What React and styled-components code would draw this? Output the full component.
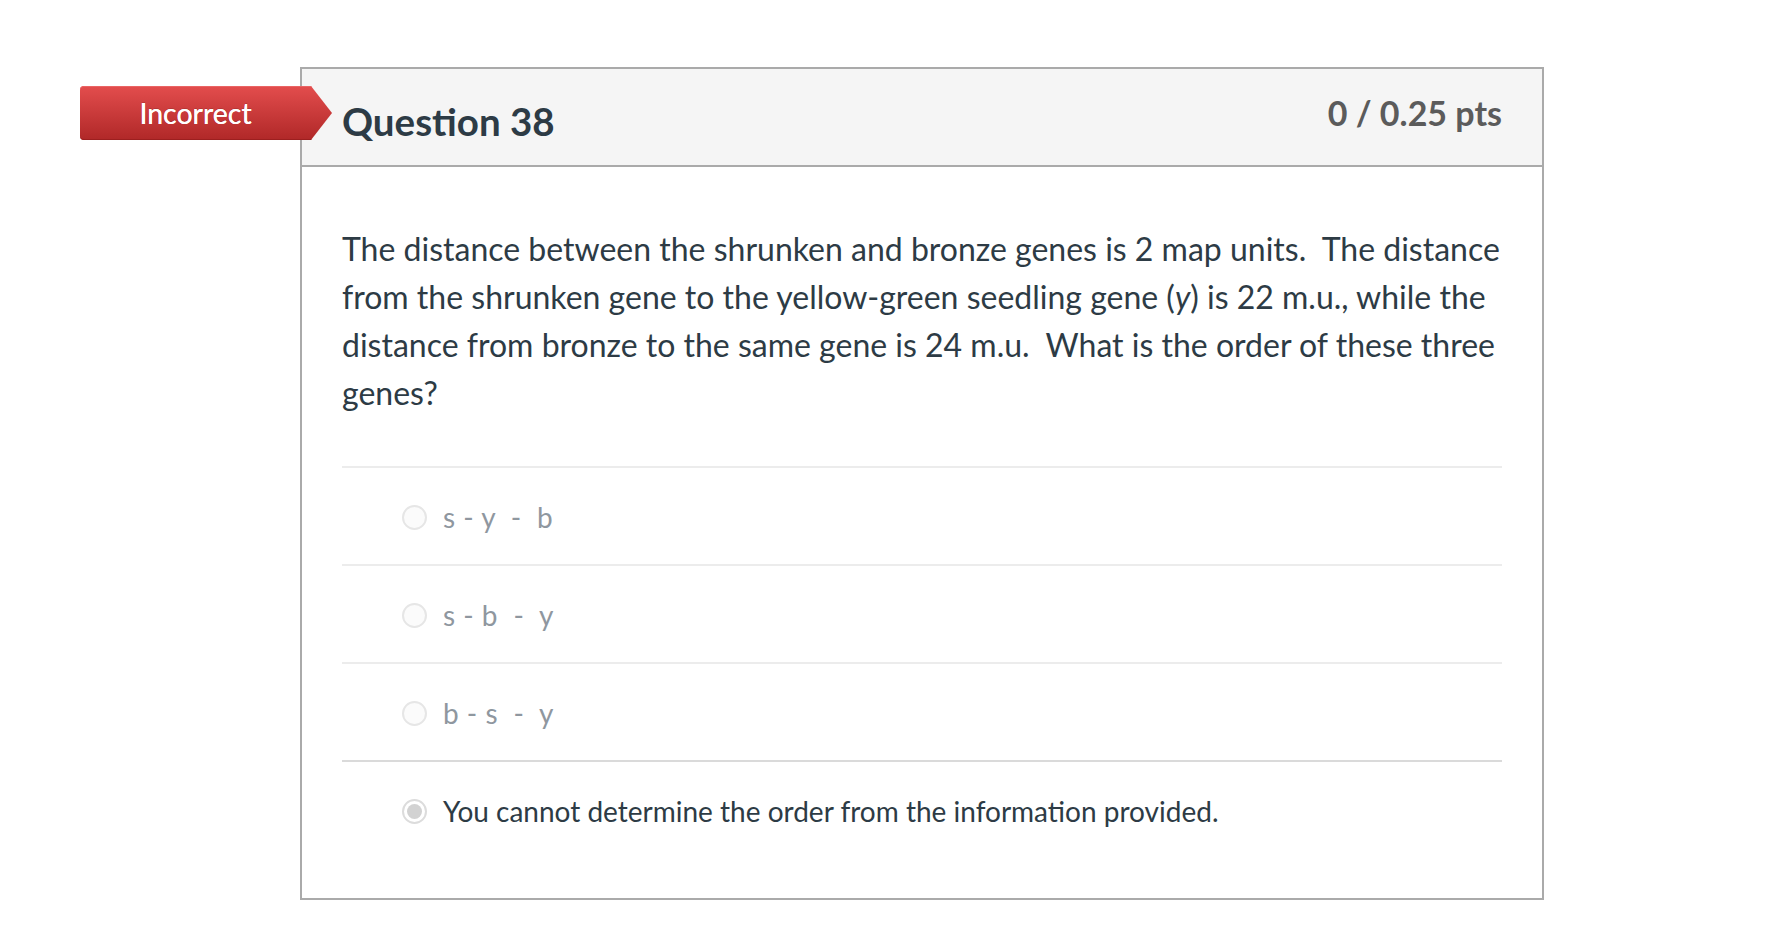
import React from "react";
import styled, { createGlobalStyle } from "styled-components";

const GlobalStyle = createGlobalStyle`
  html, body {
    margin: 0;
    padding: 0;
    background: #ffffff;
  }
  body {
    font-family: Lato, "Noto Sans", "Liberation Sans", sans-serif;
    color: #2d3b45;
  }
  * { box-sizing: border-box; }
`;

const Page = styled.div`
  padding: 67px 0 40px 300px;
  min-height: 946px;
`;

const Card = styled.section`
  position: relative;
  width: 1244px;
  border: 2px solid #aaaaaa;
  background: #ffffff;
`;

const Badge = styled.div`
  position: absolute;
  left: -222px;
  top: 17px;
  width: 252px;
  height: 54px;
  padding-right: 21px;
  display: flex;
  align-items: center;
  justify-content: center;
  border-radius: 4px 0 0 4px;
  background: linear-gradient(#e34d4d, #b02828);
  box-shadow: inset 0 -1px 0 #9c1f1f, inset 0 1px 0 #ea6464;
  clip-path: polygon(0 0, calc(100% - 21px) 0, 100% 50%, calc(100% - 21px) 100%, 0 100%);
  color: #ffffff;
  font-size: 28.5px;
  line-height: 54px;
  font-weight: 400;
  text-shadow: 0 0 0.6px #ffffff, 0 -1px 0 rgba(0, 0, 0, 0.15);
`;

const Header = styled.header`
  height: 98px;
  display: flex;
  justify-content: space-between;
  align-items: flex-start;
  padding: 0 40px;
  background: #f5f5f5;
  border-bottom: 2px solid #aaaaaa;
`;

const Title = styled.h2`
  margin: 29px 0 0;
  font-size: 38.5px;
  line-height: 1.2;
  font-weight: 700;
  color: #2d3b45;
`;

const Points = styled.div`
  margin-top: 24px;
  font-size: 34px;
  line-height: 1.2;
  font-weight: 700;
  color: #5b5b5b;
`;

const Body = styled.div`
  padding: 58px 40px 40px;
`;

const QuestionText = styled.p`
  margin: 0 0 49px;
  font-size: 32px;
  line-height: 48px;
  white-space: nowrap;
  color: #2d3b45;
`;

const Answers = styled.div`
  display: flex;
  flex-direction: column;
`;

const AnswerRow = styled.div`
  display: flex;
  align-items: center;
  height: 98px;
  padding: 28px 0 26px 60px;
  border-top: 2px solid ${(p) => (p.$strong ? "#dadada" : "#ececec")};
`;

const Radio = styled.span`
  flex: none;
  width: 25px;
  height: 25px;
  border-radius: 50%;
  border: 2px solid ${(p) => (p.$checked ? "#dcdcdc" : "#e6e6e6")};
  background: ${(p) => (p.$checked ? "#ffffff" : "#fbfbfb")};
  display: flex;
  align-items: center;
  justify-content: center;
  &::after {
    content: "";
    display: ${(p) => (p.$checked ? "block" : "none")};
    width: 15px;
    height: 15px;
    border-radius: 50%;
    background: #d2d2d2;
  }
`;

const AnswerText = styled.span`
  margin-left: 16px;
  font-size: 28px;
  line-height: 42px;
  white-space: pre;
  letter-spacing: ${(p) => (p.$checked ? "0" : "0.5px")};
  color: ${(p) => (p.$checked ? "#2d3b45" : "#8f979f")};
`;

const answers = [
  { text: "s - y  -  b", checked: false },
  { text: "s - b  -  y", checked: false },
  { text: "b - s  -  y", checked: false },
  { text: "You cannot determine the order from the information provided.", checked: true },
];

export default function App() {
  return (
    <>
      <GlobalStyle />
      <Page>
        <Card>
          <Badge>Incorrect</Badge>
          <Header>
            <Title>Question 38</Title>
            <Points>0 / 0.25 pts</Points>
          </Header>
          <Body>
            <QuestionText>
              The distance between the shrunken and bronze genes is 2 map units.&nbsp; The distance
              <br />
              from the shrunken gene to the yellow-green seedling gene (<i>y</i>) is 22 m.u., while the
              <br />
              distance from bronze to the same gene is 24 m.u.&nbsp; What is the order of these three
              <br />
              genes?
            </QuestionText>
            <Answers>
              {answers.map((a, i) => (
                <AnswerRow key={i} $strong={i === answers.length - 1}>
                  <Radio $checked={a.checked} />
                  <AnswerText $checked={a.checked}>{a.text}</AnswerText>
                </AnswerRow>
              ))}
            </Answers>
          </Body>
        </Card>
      </Page>
    </>
  );
}
